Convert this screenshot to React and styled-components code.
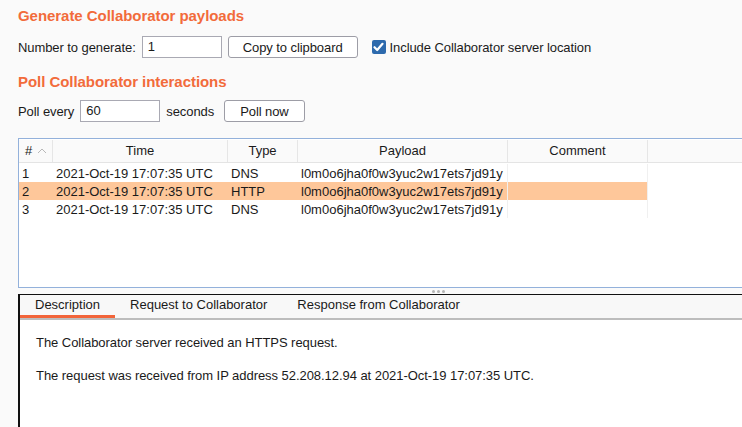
import React from "react";
import styled, { createGlobalStyle } from "styled-components";

const Global = createGlobalStyle`
  html, body { margin: 0; padding: 0; background: #fafafa; }
  body { font-family: "Liberation Sans", Arial, sans-serif; font-size: 13px; color: #1a1a1a; overflow: hidden; }
  * { box-sizing: border-box; }
`;

const Page = styled.div`
  width: 742px;
  height: 427px;
  padding: 7px 0 0 18px;
  display: flex;
  flex-direction: column;
  overflow: hidden;
`;

const SectionTitle = styled.h2`
  margin: 0;
  font-size: 15px;
  font-weight: 700;
  color: #f26b3b;
  line-height: 18px;
  margin-top: ${(p) => p.$top || 0}px;
  letter-spacing: -0.05px;
`;

const ControlRow = styled.div`
  display: flex;
  align-items: center;
  height: 22px;
  margin-top: ${(p) => p.$top || 0}px;
  white-space: nowrap;
  letter-spacing: -0.08px;
`;

const Label = styled.span`
  margin-right: ${(p) => p.$gap || 6}px;
`;

const TextInput = styled.div`
  width: 80px;
  height: 22px;
  border: 1px solid #a9a9b3;
  background: #fff;
  padding: 3px 5px;
  line-height: 14px;
  margin-right: ${(p) => p.$gap || 6}px;
`;

const Button = styled.button`
  height: 22px;
  padding: 0 ${(p) => p.$pad || 14}px;
  border: 1px solid #9d9da6;
  border-radius: 3px;
  background: #fff;
  font-family: inherit;
  font-size: 13px;
  letter-spacing: -0.08px;
  color: #1a1a1a;
  margin-right: 14px;
`;

const CheckWrap = styled.label`
  display: flex;
  align-items: center;
  gap: 4px;
`;

const CheckBox = styled.span`
  width: 14px;
  height: 14px;
  border-radius: 2px;
  background: #2d6aad;
  display: flex;
  align-items: center;
  justify-content: center;
`;

const TableBox = styled.div`
  margin-top: 16px;
  height: 150px;
  border: 1px solid #93b1db;
  border-right: none;
  background: #fff;
`;

const Row = styled.div`
  display: grid;
  grid-template-columns: 34px 175px 70px 210px 140px;
  height: ${(p) => (p.$head ? 23 : 18)}px;
  background: ${(p) => (p.$head ? "#fafafa" : "transparent")};
  border-bottom: ${(p) => (p.$head ? "1px solid #e4e4e4" : "none")};
  margin-bottom: ${(p) => (p.$head ? 1 : 0)}px;
  margin-top: ${(p) => (p.$head ? 1 : 0)}px;
`;

const HeadCell = styled.div`
  display: flex;
  align-items: center;
  justify-content: ${(p) => (p.$left ? "flex-start" : "center")};
  padding-left: ${(p) => (p.$left ? 6 : 0)}px;
  padding-bottom: 1px;
  border-right: 1px solid #e6e6e6;
  gap: 5px;
`;

const Cell = styled.div`
  display: flex;
  align-items: center;
  padding-left: 3px;
  background: ${(p) => (p.$sel ? "#fec79a" : "transparent")};
  border-right: ${(p) => (p.$line ? "1px solid #f0f0f0" : "none")};
  white-space: nowrap;
`;

const Splitter = styled.div`
  height: 6px;
  display: flex;
  align-items: center;
  gap: 2px;
  padding-left: 414px;
`;

const Dot = styled.span`
  width: 3px;
  height: 3px;
  border-radius: 50%;
  background: #b5b5b5;
`;

const Detail = styled.div`
  flex: 1;
  border-top: 1px solid #111;
  border-left: 2px solid #111;
  display: flex;
  flex-direction: column;
  background: #fff;
`;

const TabBar = styled.div`
  display: flex;
  height: 25px;
  background: #f8f8f8;
  border-bottom: 2px solid #bdbdbd;
`;

const Tab = styled.div`
  padding: 0 15px 1px;
  display: flex;
  align-items: center;
  height: 23px;
  border-bottom: ${(p) => (p.$active ? "3px solid #f2643a" : "3px solid transparent")};
  margin-bottom: -1px;
`;

const Content = styled.div`
  padding: 15px 0 0 16px;
  display: flex;
  flex-direction: column;
  gap: 18px;
`;

const Para = styled.p`
  margin: 0;
  line-height: 15px;
  letter-spacing: -0.05px;
`;

const rows = [
  { n: 1, type: "DNS" },
  { n: 2, type: "HTTP", sel: true },
  { n: 3, type: "DNS" },
];

export default function App() {
  return (
    <>
      <Global />
      <Page>
        <SectionTitle>Generate Collaborator payloads</SectionTitle>
        <ControlRow $top={11}>
          <Label>Number to generate:</Label>
          <TextInput>1</TextInput>
          <Button $pad={14}>Copy to clipboard</Button>
          <CheckWrap>
            <CheckBox>
              <svg width="11" height="10" viewBox="0 0 11 10">
                <path d="M1.5 5.2 L4.2 8 L9.5 1.8" fill="none" stroke="#fff" strokeWidth="2.2" strokeLinecap="round" strokeLinejoin="round" />
              </svg>
            </CheckBox>
            Include Collaborator server location
          </CheckWrap>
        </ControlRow>
        <SectionTitle $top={15}>Poll Collaborator interactions</SectionTitle>
        <ControlRow $top={9}>
          <Label>Poll every</Label>
          <TextInput>60</TextInput>
          <Label $gap={10}>seconds</Label>
          <Button $pad={15}>Poll now</Button>
        </ControlRow>
        <TableBox>
          <Row $head>
            <HeadCell $left>
              #
              <svg width="10" height="6" viewBox="0 0 10 6">
                <path d="M1 5 L5 1 L9 5" fill="none" stroke="#b8b8b8" strokeWidth="1" />
              </svg>
            </HeadCell>
            <HeadCell>Time</HeadCell>
            <HeadCell>Type</HeadCell>
            <HeadCell>Payload</HeadCell>
            <HeadCell>Comment</HeadCell>
          </Row>
          {rows.map((r) => (
            <Row key={r.n}>
              <Cell $sel={r.sel}>{r.n}</Cell>
              <Cell $sel={r.sel}>2021-Oct-19 17:07:35 UTC</Cell>
              <Cell $sel={r.sel}>{r.type}</Cell>
              <Cell $sel={r.sel} $line>l0m0o6jha0f0w3yuc2w17ets7jd91y</Cell>
              <Cell $sel={r.sel} $line></Cell>
            </Row>
          ))}
        </TableBox>
        <Splitter>
          <Dot />
          <Dot />
          <Dot />
        </Splitter>
        <Detail>
          <TabBar>
            <Tab $active>Description</Tab>
            <Tab>Request to Collaborator</Tab>
            <Tab>Response from Collaborator</Tab>
          </TabBar>
          <Content>
            <Para>The Collaborator server received an HTTPS request.</Para>
            <Para>The request was received from IP address 52.208.12.94 at 2021-Oct-19 17:07:35 UTC.</Para>
          </Content>
        </Detail>
      </Page>
    </>
  );
}
